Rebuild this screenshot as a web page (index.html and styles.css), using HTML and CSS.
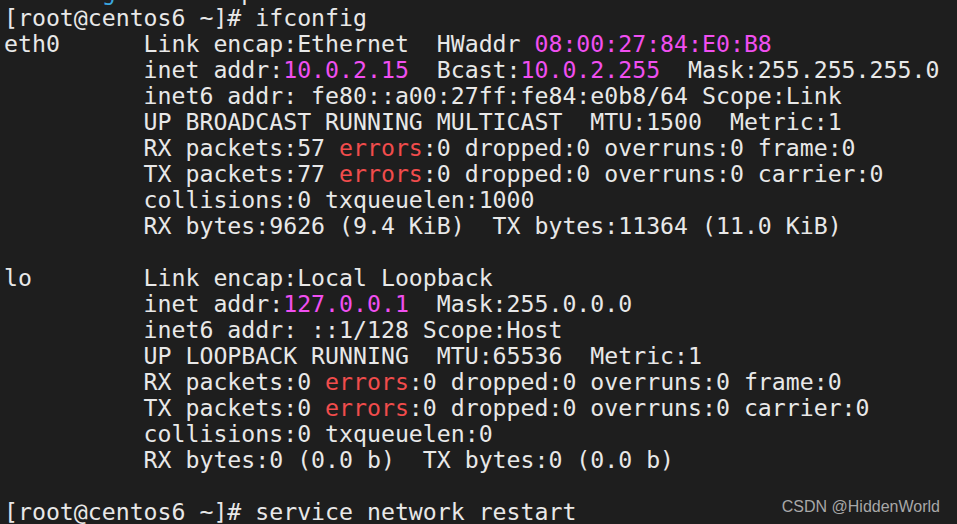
FILE: index.html
```html
<!DOCTYPE html>
<html>
<head>
  <title>ifconfig</title>
  <link rel="stylesheet" href="styles.css">
</head>
<body>
  <div class="terminal">
<pre class="output"><span class="cut">       <span class="cyan">g</span>         p</span>
[root@centos6 ~]# ifconfig
eth0      Link encap:Ethernet  HWaddr <span class="mag">08:00:27:84:E0:B8</span>
          inet addr:<span class="mag">10.0.2.15</span>  Bcast:<span class="mag">10.0.2.255</span>  Mask:255.255.255.0
          inet6 addr: fe80::a00:27ff:fe84:e0b8/64 Scope:Link
          UP BROADCAST RUNNING MULTICAST  MTU:1500  Metric:1
          RX packets:57 <span class="red">errors</span>:0 dropped:0 overruns:0 frame:0
          TX packets:77 <span class="red">errors</span>:0 dropped:0 overruns:0 carrier:0
          collisions:0 txqueuelen:1000
          RX bytes:9626 (9.4 KiB)  TX bytes:11364 (11.0 KiB)

lo        Link encap:Local Loopback
          inet addr:<span class="mag">127.0.0.1</span>  Mask:255.0.0.0
          inet6 addr: ::1/128 Scope:Host
          UP LOOPBACK RUNNING  MTU:65536  Metric:1
          RX packets:0 <span class="red">errors</span>:0 dropped:0 overruns:0 frame:0
          TX packets:0 <span class="red">errors</span>:0 dropped:0 overruns:0 carrier:0
          collisions:0 txqueuelen:0
          RX bytes:0 (0.0 b)  TX bytes:0 (0.0 b)

[root@centos6 ~]# service network restart</pre>
    <div class="watermark">CSDN @HiddenWorld</div>
  </div>
</body>
</html>
```
FILE: styles.css
```css
html, body {
  margin: 0;
  height: 100%;
  background-color: #1e1e1e;
  overflow: hidden;
}

.terminal {
  display: flow-root;
  position: relative;
  height: 100%;
}

.output {
  margin: -21px 0 0 0;
  padding-left: 4px;
  font-family: 'DejaVu Sans Mono', monospace;
  font-size: 23.2px;
  line-height: 26px;
  color: #e8e8e8;
}

.mag {
  color: #f04ff0;
}

.red {
  color: #f14c4c;
}

.cyan {
  color: #3aa8e0;
}

/* CSDN watermark over the bottom right corner */
.watermark {
  position: absolute;
  right: 17px;
  bottom: 8px;
  font-family: 'Liberation Sans', Arial, sans-serif;
  font-size: 16px;
  color: #a8a8a8;
}
```
